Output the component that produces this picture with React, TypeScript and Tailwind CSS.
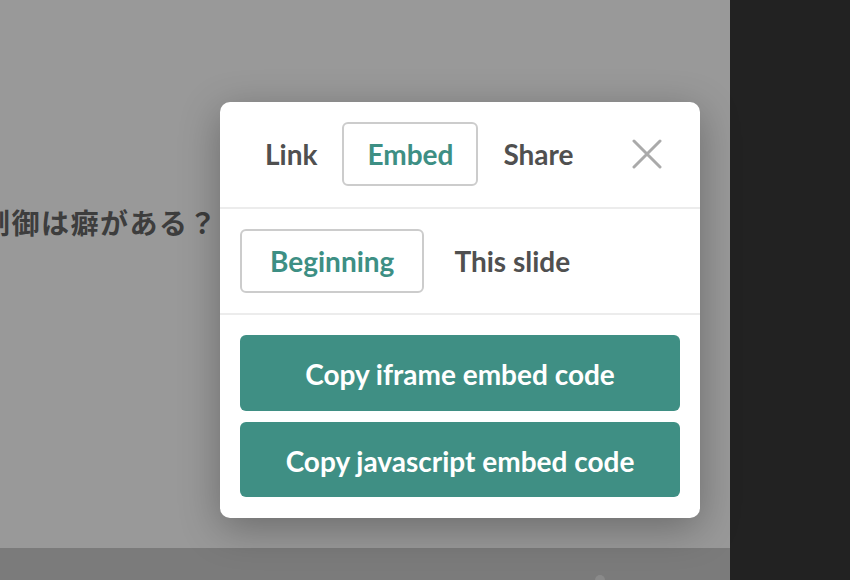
import { useState } from "react"

const lato = "font-['Lato','Liberation_Sans',sans-serif]"

function CloseIcon() {
  return (
    <svg width="30" height="30" viewBox="0 0 30 30" fill="none">
      <path d="M2 2L28 28M28 2L2 28" stroke="#aaaaaa" strokeWidth="3" strokeLinecap="round" />
    </svg>
  )
}

export default function App() {
  const [tab, setTab] = useState("embed")
  const [start, setStart] = useState("beginning")

  const tabs = [
    { id: "link", label: "Link" },
    { id: "embed", label: "Embed" },
    { id: "share", label: "Share" },
  ]

  return (
    <div className={`flex h-[580px] w-[850px] overflow-hidden ${lato}`}>
      {/* dimmed slide area */}
      <div className="relative flex flex-1 flex-col bg-[#999999]">
        <div className="flex-1 overflow-hidden pt-[207px]">
          <p className="-ml-[18px] whitespace-nowrap font-['Noto_Sans_CJK_JP',sans-serif] text-[28px] font-bold leading-[30px] tracking-[1.5px] text-[#3d3d3d]">
            制御は癖がある？
          </p>
        </div>
        <div className="relative h-[32px] bg-[#7b7b7b]">
          <div className="absolute bottom-0 left-[595px] h-[5px] w-[10px] rounded-t-full bg-[#8a8a8a]" />
        </div>

        {/* share dialog */}
        <div className="absolute left-[220px] top-[102px] w-[480px] rounded-[10px] bg-white shadow-[0_10px_40px_rgba(0,0,0,0.3)]">
          <div className="flex items-center border-b-2 border-[#ececec] px-[20px] pb-[21px] pt-[20px]">
            {tabs.map((t) => (
              <button
                key={t.id}
                onClick={() => setTab(t.id)}
                className={`h-[64px] rounded-[6px] border-2 px-[23px] text-[28px] font-bold ${
                  t.id === tab ? "border-[#cccccc] text-[#3d8f84]" : "border-transparent text-[#505050]"
                }`}
              >
                {t.label}
              </button>
            ))}
            <div className="flex-1" />
            <button className="mr-[18px] flex items-center">
              <CloseIcon />
            </button>
          </div>

          <div className="flex items-center border-b-2 border-[#ececec] px-[20px] pb-[20px] pt-[20px]">
            {[
              { id: "beginning", label: "Beginning" },
              { id: "slide", label: "This slide" },
            ].map((s) => (
              <button
                key={s.id}
                onClick={() => setStart(s.id)}
                className={`h-[64px] rounded-[6px] border-2 px-[28px] text-[28px] font-bold ${
                  s.id === start ? "border-[#cccccc] text-[#3d8f84]" : "border-transparent text-[#505050]"
                }`}
              >
                {s.label}
              </button>
            ))}
          </div>

          <div className="flex flex-col gap-[11px] px-[20px] pb-[21px] pt-[20px]">
            <button className="h-[76px] rounded-[6px] bg-[#3f8f84] pt-[2px] text-[28px] font-bold text-white">
              Copy iframe embed code
            </button>
            <button className="h-[75px] rounded-[6px] bg-[#3f8f84] pt-[2px] text-[28px] font-bold text-white">
              Copy javascript embed code
            </button>
          </div>
        </div>
      </div>

      {/* side panel */}
      <div className="w-[120px] bg-[#222222]" />
    </div>
  )
}
